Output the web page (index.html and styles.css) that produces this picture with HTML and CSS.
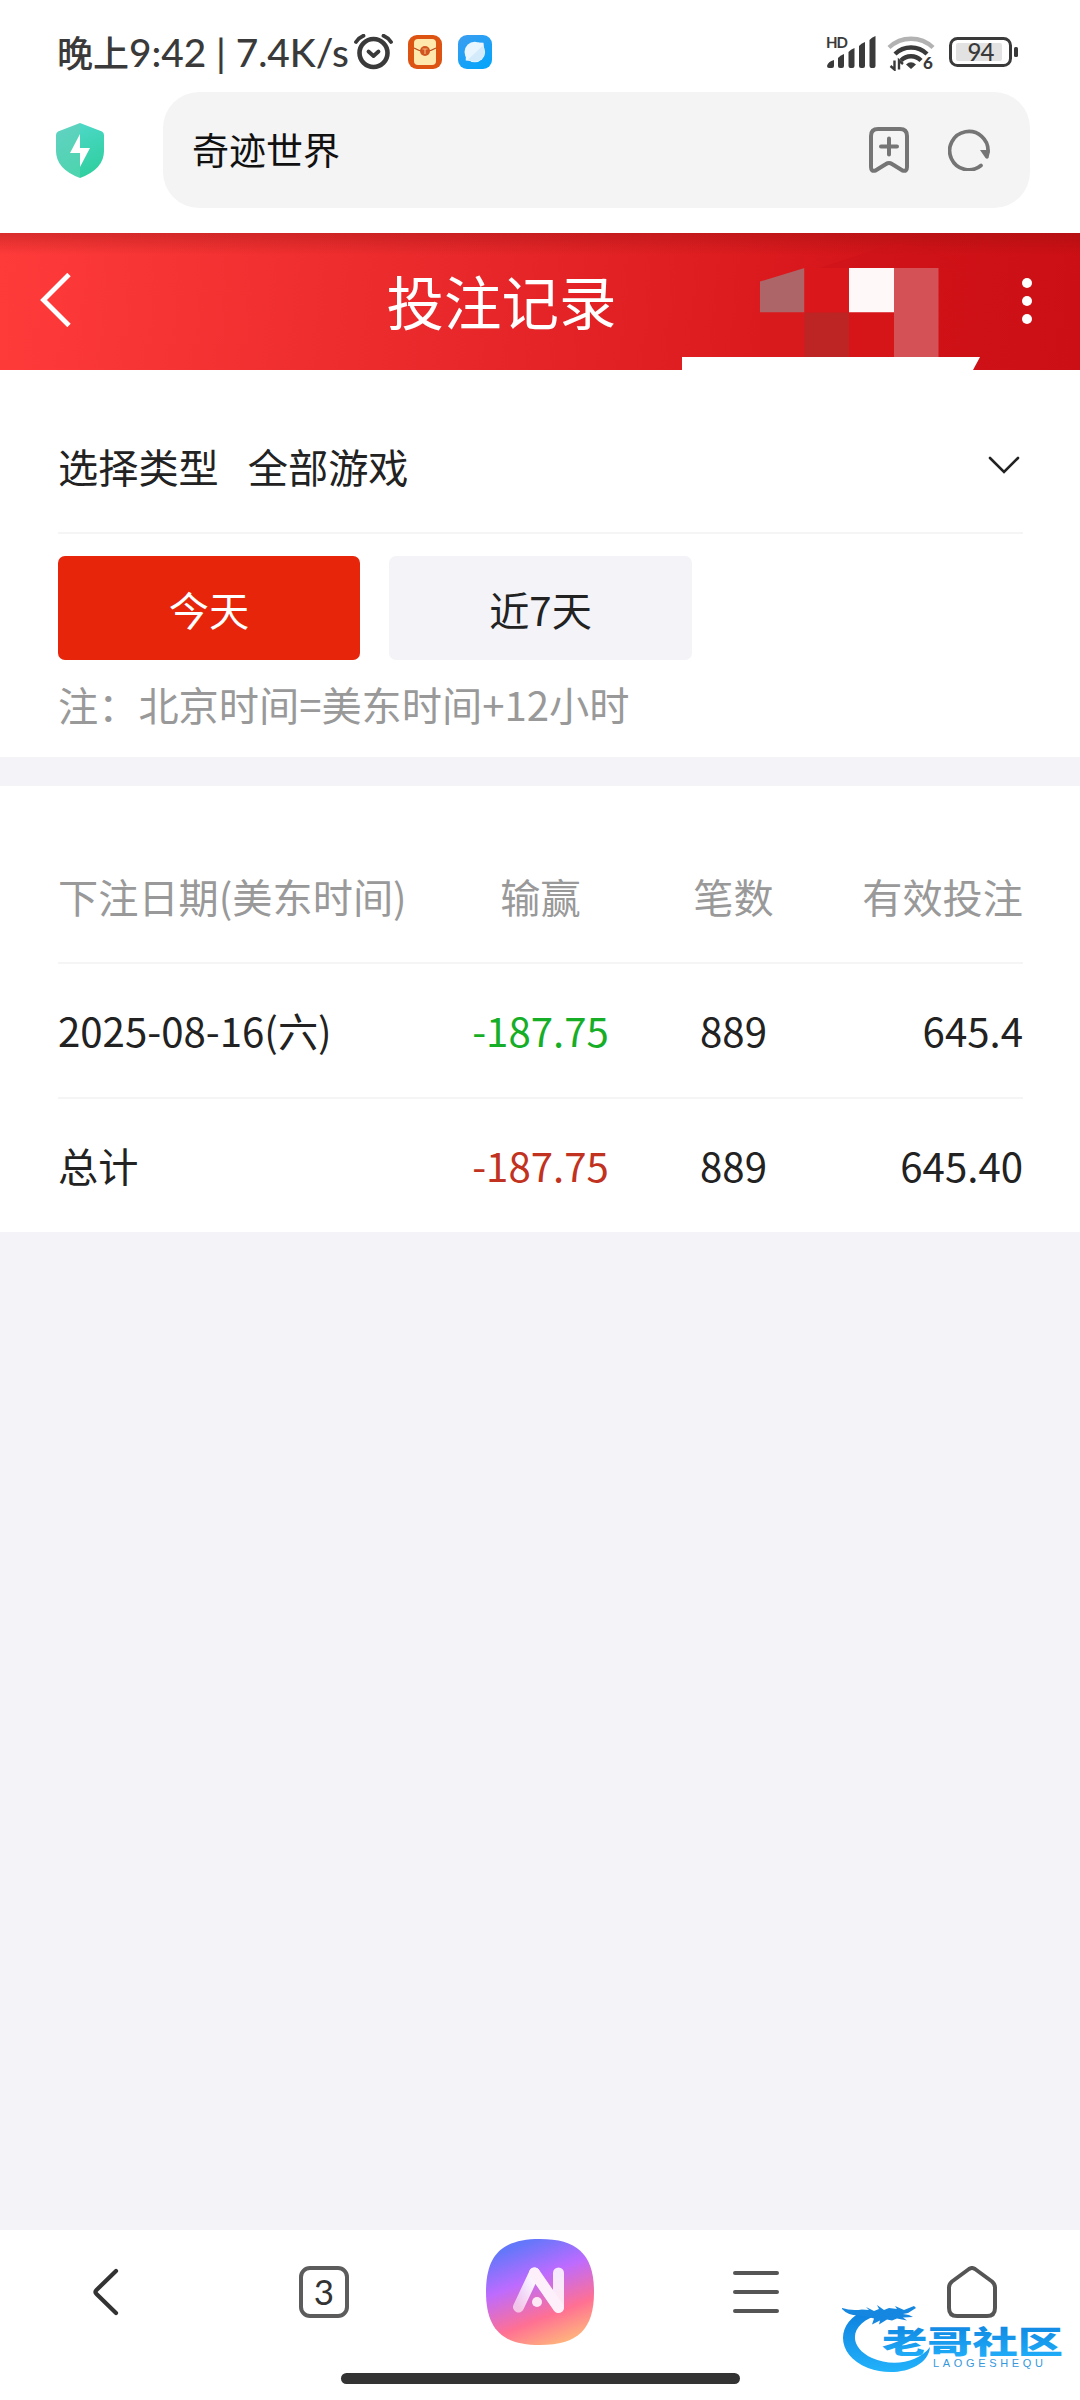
FILE: index.html
```
<!DOCTYPE html>
<html lang="zh-CN">
<head>
<meta charset="utf-8">
<title>投注记录</title>
<link rel="stylesheet" href="styles.css">
</head>
<body>
<div class="screen">
  <header class="status">
    <div class="status-left">
      <span class="clock"><span class="clock-cn">晚上</span>9:42 | 7.4K/s</span>
      <svg class="alarm" width="40" height="36" viewBox="354 34 40 36" fill="none" stroke="#3a3a3a" stroke-linecap="round">
        <circle cx="373.5" cy="53" r="14" stroke-width="4.600"/>
        <path d="M368.500 51.500l5 4.500 5-4.500" stroke-width="3.800" stroke-linejoin="round"/>
        <path d="M356 42q3-4.500 7.500-6.300M391 42q-3-4.500-7.500-6.300" stroke-width="3.800"/>
      </svg>
      <svg class="app-icon" width="34" height="34" viewBox="0 0 34 34">
        <rect width="34" height="34" rx="9" fill="#dc5312"/>
        <rect x="6" y="4" width="22" height="26" rx="4" fill="#fee8ae"/>
        <path d="M6 13q11 7 22 0" fill="none" stroke="#b84c20" stroke-width="1.200"/>
        <circle cx="17" cy="16" r="5" fill="#d0551f"/>
        <path d="M14.500 14h5M17 14v5" stroke="#f5b27c" stroke-width="1.200"/>
      </svg>
      <svg class="app-icon blue" width="34" height="34" viewBox="0 0 34 34">
        <defs><linearGradient id="sky" x2=".6" y2="1"><stop stop-color="#3d9df0"/><stop offset="1" stop-color="#08a4fa"/></linearGradient></defs>
        <rect width="34" height="34" rx="9" fill="url(#sky)"/>
        <circle cx="16.800" cy="17" r="10.300" fill="#eaf6ff"/>
        <path d="M20 7.500l5.500 .3 .5 5.200zM8 20l-.3 5.500 5.300 .5z" fill="#eaf6ff"/>
        <path d="M10 24.500L24.500 11q5 7-1 13-6 5-13.500.5z" fill="#d3ebfb"/>
      </svg>
    </div>
    <div class="status-right">
      <svg width="196" height="38" viewBox="824 33 196 38">
        <text class="hd" x="826" y="48" textLength="22">HD</text>
        <g fill="#3a3a3a">
          <path d="M827 66q1-4.500 7-6v6q0 2-2 2h-3q-2 0-2-2zM838 58q2-2.500 6-4v12q0 2-2 2h-2q-2 0-2-2zM848.500 52q2-2.500 6-4v18q0 2-2 2h-2q-2 0-2-2zM859 46q2-2.500 6-4v24q0 2-2 2h-2q-2 0-2-2zM869.500 40q2-2.500 6-4v30q0 2-2 2h-2q-2 0-2-2z"/>
          <path d="M911 69l-5-4.500q5-4.500 10 0z"/>
        </g>
        <g fill="none" stroke="#3a3a3a" stroke-width="4.400">
          <path d="M889 47.500a32 32 0 0 1 44 0" stroke="#b2b2b2"/>
          <path d="M895 54a23 23 0 0 1 32 0M901 60.500a14 14 0 0 1 20 0"/>
          <path d="M894.500 60.500v9l-4-3.500M899 69.500v-9l4 3.500" stroke-width="2.400"/>
        </g>
        <text class="gen" x="923" y="69">6</text>
        <rect x="950.500" y="38.500" width="60" height="27" rx="7" fill="none" stroke="#3a3a3a" stroke-width="3"/>
        <rect x="956" y="43" width="46" height="18" rx="2" fill="#e2e2e2"/>
        <rect x="1014" y="47" width="4" height="10" rx="1.500" fill="#3a3a3a"/>
        <text class="pct" x="967.500" y="60.500" textLength="27">94</text>
      </svg>
    </div>
  </header>

  <div class="browser-bar">
    <svg class="shield" width="48" height="55" viewBox="0 0 48 55">
      <defs><linearGradient id="sh" x2=".3" y2="1"><stop stop-color="#62d2c4"/><stop offset="1" stop-color="#4fd4b0"/></linearGradient>
      <linearGradient id="sh2" x2=".2" y2="1"><stop stop-color="#4dd8c8"/><stop offset="1" stop-color="#2fcf9f"/></linearGradient></defs>
      <path d="M24 0L2 8.500Q0 9.500 0 12v16Q0 46 24 55z" fill="url(#sh)"/>
      <path d="M24 0l22 8.500Q48 9.500 48 12v16Q48 46 24 55z" fill="url(#sh2)"/>
      <path d="M24 11L14 30h10v14l10-19H24z" fill="#fff"/>
    </svg>
    <div class="address">
      <span class="address-text">奇迹世界</span>
      <svg width="40" height="46" viewBox="0 0 40 46" fill="none" stroke="#757575" stroke-width="4" stroke-linecap="round" stroke-linejoin="round">
        <path d="M9 2h22q7 0 7 7v31q0 5-4.500 3.500L23 37q-3-2-6 0l-10.500 6.500Q2 45 2 40V9q0-7 7-7z"/>
        <path d="M20 11.500v16M12 19.500h16"/>
      </svg>
      <svg class="reload" width="42" height="42" viewBox="0 0 42 42">
        <path d="M33 36.500A19.200 19.200 0 1 1 40 23" fill="none" stroke="#757575" stroke-width="3.700" stroke-linecap="round"/>
        <path d="M32 21h9.500q.3 4-1 8-1.500 1.500-3 0z" fill="#757575"/>
      </svg>
    </div>
  </div>

  <div class="titlebar">
    <svg class="back" width="31" height="54" viewBox="0 0 31 54" fill="none" stroke="#fff" stroke-width="4.800"><path d="M29 1.500L3.500 27 29 52.500"/></svg>
    <h1>投注记录</h1>
    <svg class="mosaic" width="300" height="137" viewBox="681 233 300 137">
      <path d="M760 281.500L804.500 268v44.500H760z" fill="#ad6568"/>
      <path d="M760 312.500h44.500V357H760z" fill="#d91a1d"/>
      <path d="M804.500 268H849v44.500h-44.500z" fill="#da171a"/>
      <path d="M804.500 312.500H849V357h-44.500z" fill="#bd2424"/>
      <path d="M849 268h45v44.500h-45z" fill="#fff8f9"/>
      <path d="M849 312.500h45V357h-45z" fill="#d61518"/>
      <path d="M894 268h44.500v89H894z" fill="#d45256"/>
      <path d="M820 268l73-24q34-2 66 24z" fill="#cb1117" opacity=".5"/>
      <path d="M682 357h298l-7 13H682z" fill="#fff"/>
    </svg>
    <svg class="dots" width="10" height="46" viewBox="0 0 10 46" fill="#fff"><circle cx="5" cy="5" r="5"/><circle cx="5" cy="23" r="5"/><circle cx="5" cy="41" r="5"/></svg>
  </div>

  <section class="filters">
    <div class="type-row">
      <span class="type-label">选择类型</span><span>全部游戏</span>
      <svg class="chev" width="32" height="18" viewBox="0 0 32 18" fill="none" stroke="#222" stroke-width="2.600" stroke-linecap="round"><path d="M2 2l14 14L30 2"/></svg>
    </div>
    <div class="days">
      <button class="day active">今天</button>
      <button class="day">近7天</button>
    </div>
    <p class="note">注：北京时间=美东时间+12小时</p>
  </section>

  <section class="records">
    <div class="row head"><span>下注日期(美东时间)</span><span>输赢</span><span>笔数</span><span>有效投注</span></div>
    <div class="row"><span>2025-08-16(六)</span><span class="green">-187.75</span><span>889</span><span>645.4</span></div>
    <div class="row"><span>总计</span><span class="red">-187.75</span><span>889</span><span>645.40</span></div>
  </section>

  <nav class="toolbar">
    <div class="tools">
      <span class="tool"><svg width="26" height="48" viewBox="0 0 26 48" fill="none" stroke="#333" stroke-width="4.200" stroke-linecap="round" stroke-linejoin="round"><path d="M23 3L3.500 22q-2 2 0 4L23 45"/></svg></span>
      <span class="tool"><span class="tabs">3</span></span>
      <span class="tool"><svg class="ai" width="108" height="106" viewBox="0 0 108 106">
        <defs>
          <linearGradient id="ai" x1=".3" y1="0" x2=".7" y2="1"><stop offset=".05" stop-color="#6477fa"/><stop offset=".37" stop-color="#bd6bff"/><stop offset=".72" stop-color="#ff7093"/><stop offset="1" stop-color="#ffb67c"/></linearGradient>
          <linearGradient id="leg" x1="1" y1="0" x2="0" y2="1"><stop stop-color="#fff"/><stop offset="1" stop-color="#fff" stop-opacity=".6"/></linearGradient>
        </defs>
        <path d="M54 0C92 0 108 16 108 53S92 106 54 106 0 90 0 53 16 0 54 0z" fill="url(#ai)"/>
        <g fill="none" stroke-width="11" stroke-linecap="round">
          <path d="M48.500 34L32.500 68" stroke="url(#leg)"/>
          <path d="M72.500 34V68" stroke="#fff" stroke-opacity=".85"/>
          <path d="M48.500 34L72.500 68.500" stroke="#fdf0fb"/>
        </g>
        <circle cx="51" cy="63" r="5" fill="#fde8f5"/>
      </svg></span>
      <span class="tool"><svg width="46" height="42" viewBox="0 0 46 42" stroke="#555" stroke-width="4" stroke-linecap="round"><path d="M2 2h42M2 21h42M2 40h42"/></svg></span>
      <span class="tool"><svg width="50" height="52" viewBox="0 0 50 52" fill="none" stroke="#555" stroke-width="4" stroke-linejoin="round"><path d="M22 3Q25 1 28 3l17 12.500q3 2.500 3 6V42q0 8-8 8H10q-8 0-8-8V21.500q0-3.500 3-6z"/></svg></span>
    </div>
    <div class="home-pill"></div>
    <svg class="watermark" width="230" height="80" viewBox="836 2300 230 80">
      <defs><linearGradient id="wm" x2="0" y2="1"><stop stop-color="#0d7fdd"/><stop offset="1" stop-color="#22b2fb"/></linearGradient></defs>
      <path d="M866 2310C836 2321 834 2354 868 2368 894 2378 928 2369 930 2347 918 2363 892 2367 872 2358 846 2346 850 2321 882 2314z" fill="url(#wm)"/>
      <path d="M842 2308q9 3 20 1.500l7 .5-3-3 8 4 5-2-2-4 7 5 5-2 8 1-2-3 9 4 10-4 2 2-8 5-5 1 6 1 4 2-10 .5 4 3-10-2-5 2-5-1-8 5 1-4-8 4 2-6-8-2-8-1q-10 0-16-6.500z" fill="#1687e0"/>
      <text class="wm-cn" x="882" y="2353" textLength="181" lengthAdjust="spacingAndGlyphs" fill="url(#wm)">老哥社区</text>
      <text class="wm-en" x="933" y="2367" textLength="110">LAOGESHEQU</text>
    </svg>
  </nav>
</div>
</body>
</html>
```
FILE: styles.css
```
* { box-sizing: border-box; }
body { margin: 0; background: #f3f3f8; font-family: "Noto Sans CJK SC", sans-serif; color: #222; }
svg { display: block; flex: none; }
.screen { width: 1080px; height: 2400px; display: flex; flex-direction: column; }

.status { height: 92px; background: #fff; display: flex; justify-content: space-between; padding: 0 60px 0 57px; }
.status-left { display: flex; align-items: flex-start; padding-top: 34px; }
.clock { width: 297px; height: 36px; font: 500 38.8px/36px Lato, "Noto Sans CJK SC", sans-serif; color: #3a3a3a; white-space: nowrap; }
.clock-cn { font-size: 36px; }
.app-icon { margin: 1px 0 0 14px; }
.app-icon.blue { margin-left: 16px; }
.status-right { padding-top: 33px; }
.hd { font: 700 15px Lato, sans-serif; fill: #3a3a3a; }
.gen { font: 900 17px Lato, sans-serif; fill: #3a3a3a; }
.pct { font: 500 24px Lato, sans-serif; fill: #3a3a3a; }

.browser-bar { height: 141px; background: #fff; display: flex; align-items: flex-start; padding-left: 56px; }
.shield { margin-top: 31px; }
.address { margin-left: 59px; width: 867px; height: 116px; border-radius: 36px; background: #f4f4f4; display: flex; align-items: center; padding: 0 40px 0 29px; color: #111; }
.address-text { flex: 1; font-size: 37px; line-height: 50px; padding-bottom: 3px; }
.reload { margin-left: 39px; }

.titlebar { height: 137px; position: relative; display: flex; align-items: center; justify-content: space-between; padding: 0 48px 0 40px; background: linear-gradient(#8c101055, #b0101000 22px), linear-gradient(95deg, #ff3b3a 0%, #e8282a 42%, #de1d20 65%, #d01217 85%, #cb0f14 100%); }
.back { margin-bottom: 3px; }
.dots { margin-bottom: 2px; }
.titlebar h1 { position: absolute; inset: 0; margin: 0; text-align: center; padding-right: 77px; font-size: 57.5px; line-height: 135px; font-weight: 400; color: #fff; }
.mosaic { position: absolute; left: 681px; top: 0; }

.filters { background: #fff; height: 387px; padding: 0 57px 0 58px; font-size: 40.2px; }
.type-row { height: 164px; border-bottom: 2px solid #f5f5f5; display: flex; align-items: center; padding-top: 28px; }
.type-label { margin-right: 29px; }
.chev { margin: 0 3px 0 auto; }
.days { display: flex; gap: 29px; margin-top: 22px; }
.day { width: 302px; height: 104px; border: 0; border-radius: 7px; padding: 0; background: #f3f3f8; color: #222; font: inherit; }
.day:last-child { width: 303px; }
.day.active { background: #e6250b; color: #fff; }
.note { margin: 14px 0 0; line-height: 60px; color: #999; }

.records { background: #fff; margin-top: 29px; height: 446px; padding: 43px 57px 0 58px; font-size: 40.2px; }
.row { height: 135px; display: grid; grid-template-columns: 386px 193px 193px 193px; align-items: center; border-bottom: 2px solid #f5f5f5; white-space: nowrap; text-align: center; padding-bottom: 3px; }
.row:last-child { border: 0; padding-bottom: 5px; }
.row.head { padding-bottom: 0; }
.row span:first-child { text-align: left; }
.row span:last-child { text-align: right; }
.head { color: #999; }
.green { color: #17ae27; }
.red { color: #c13220; }

.toolbar { margin-top: auto; height: 170px; background: #fff; position: relative; }
.tools { display: grid; grid-template-columns: repeat(5, 216px); height: 124px; }
.tool { display: flex; align-items: center; justify-content: center; padding-bottom: 1px; }
.tool:first-child { padding-right: 4px; padding-bottom: 0; }
.tabs { width: 50px; height: 52px; border: 4px solid #5c5c5c; border-radius: 11px; font: 35px/43px Lato, sans-serif; text-align: center; color: #333; }
.home-pill { width: 399px; height: 11px; margin: 19px auto 0; border-radius: 6px; background: #333; }
.watermark { position: absolute; left: 836px; top: 70px; }
.wm-cn { font: 900 31px "Noto Sans CJK SC", sans-serif; }
.wm-en { font: 11px "Liberation Sans", sans-serif; fill: #3698dc; }
```
